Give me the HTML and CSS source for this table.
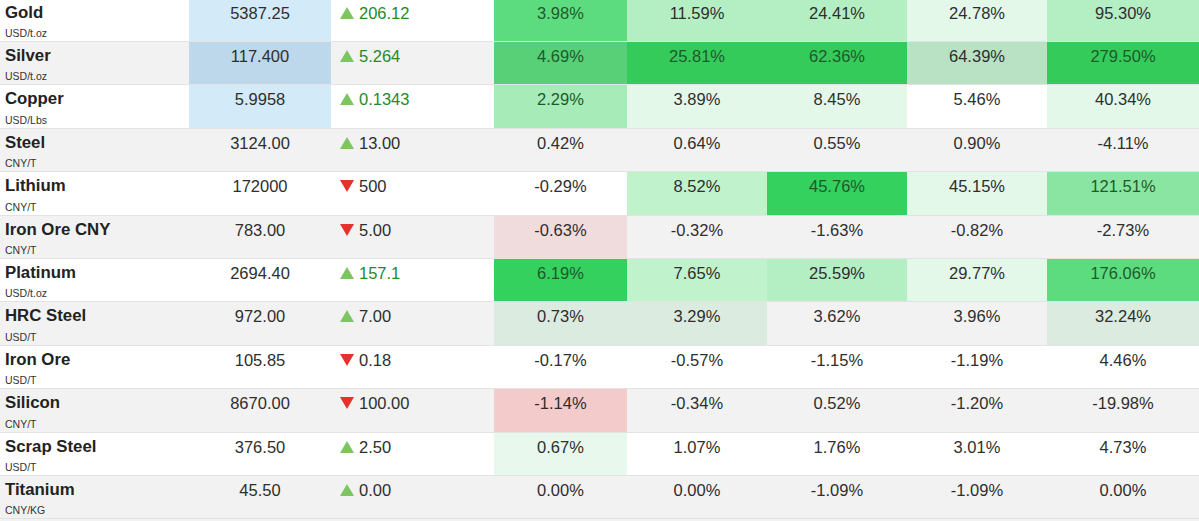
FILE: index.html
```html
<!DOCTYPE html>
<html>
<head>
<meta charset="utf-8">
<link rel="stylesheet" href="styles.css">
</head>
<body>
<div class="table">
  <div class="row">
    <div class="cell name"><div class="title">Gold</div><div class="unit">USD/t.oz</div></div>
    <div class="cell price blue">5387.25</div>
    <div class="cell chg up"><span class="tri-up"></span><span class="num green">206.12</span></div>
    <div class="cell pct g4 dk">3.98%</div>
    <div class="cell pct g2">11.59%</div>
    <div class="cell pct g2">24.41%</div>
    <div class="cell pct g1">24.78%</div>
    <div class="cell pct g2">95.30%</div>
  </div>
  <div class="row alt">
    <div class="cell name"><div class="title">Silver</div><div class="unit">USD/t.oz</div></div>
    <div class="cell price blue2">117.400</div>
    <div class="cell chg up"><span class="tri-up"></span><span class="num green">5.264</span></div>
    <div class="cell pct g4s dk">4.69%</div>
    <div class="cell pct g5 dk">25.81%</div>
    <div class="cell pct g5 dk">62.36%</div>
    <div class="cell pct g2s">64.39%</div>
    <div class="cell pct g5 dk">279.50%</div>
  </div>
  <div class="row">
    <div class="cell name"><div class="title">Copper</div><div class="unit">USD/Lbs</div></div>
    <div class="cell price blue">5.9958</div>
    <div class="cell chg up"><span class="tri-up"></span><span class="num green">0.1343</span></div>
    <div class="cell pct g3b dk">2.29%</div>
    <div class="cell pct g1">3.89%</div>
    <div class="cell pct g1">8.45%</div>
    <div class="cell pct">5.46%</div>
    <div class="cell pct g1">40.34%</div>
  </div>
  <div class="row alt">
    <div class="cell name"><div class="title">Steel</div><div class="unit">CNY/T</div></div>
    <div class="cell price">3124.00</div>
    <div class="cell chg up"><span class="tri-up"></span><span class="num">13.00</span></div>
    <div class="cell pct">0.42%</div>
    <div class="cell pct">0.64%</div>
    <div class="cell pct">0.55%</div>
    <div class="cell pct">0.90%</div>
    <div class="cell pct">-4.11%</div>
  </div>
  <div class="row">
    <div class="cell name"><div class="title">Lithium</div><div class="unit">CNY/T</div></div>
    <div class="cell price">172000</div>
    <div class="cell chg down"><span class="tri-down"></span><span class="num">500</span></div>
    <div class="cell pct">-0.29%</div>
    <div class="cell pct g2b">8.52%</div>
    <div class="cell pct g5b dk">45.76%</div>
    <div class="cell pct g1">45.15%</div>
    <div class="cell pct g3 dk">121.51%</div>
  </div>
  <div class="row alt">
    <div class="cell name"><div class="title">Iron Ore CNY</div><div class="unit">CNY/T</div></div>
    <div class="cell price">783.00</div>
    <div class="cell chg down"><span class="tri-down"></span><span class="num">5.00</span></div>
    <div class="cell pct r1">-0.63%</div>
    <div class="cell pct">-0.32%</div>
    <div class="cell pct">-1.63%</div>
    <div class="cell pct">-0.82%</div>
    <div class="cell pct">-2.73%</div>
  </div>
  <div class="row">
    <div class="cell name"><div class="title">Platinum</div><div class="unit">USD/t.oz</div></div>
    <div class="cell price">2694.40</div>
    <div class="cell chg up"><span class="tri-up"></span><span class="num green">157.1</span></div>
    <div class="cell pct g5b dk">6.19%</div>
    <div class="cell pct g2b">7.65%</div>
    <div class="cell pct g2">25.59%</div>
    <div class="cell pct g1">29.77%</div>
    <div class="cell pct g4 dk">176.06%</div>
  </div>
  <div class="row alt">
    <div class="cell name"><div class="title">HRC Steel</div><div class="unit">USD/T</div></div>
    <div class="cell price">972.00</div>
    <div class="cell chg up"><span class="tri-up"></span><span class="num">7.00</span></div>
    <div class="cell pct gh">0.73%</div>
    <div class="cell pct gh">3.29%</div>
    <div class="cell pct">3.62%</div>
    <div class="cell pct">3.96%</div>
    <div class="cell pct gh">32.24%</div>
  </div>
  <div class="row">
    <div class="cell name"><div class="title">Iron Ore</div><div class="unit">USD/T</div></div>
    <div class="cell price">105.85</div>
    <div class="cell chg down"><span class="tri-down"></span><span class="num">0.18</span></div>
    <div class="cell pct">-0.17%</div>
    <div class="cell pct">-0.57%</div>
    <div class="cell pct">-1.15%</div>
    <div class="cell pct">-1.19%</div>
    <div class="cell pct">4.46%</div>
  </div>
  <div class="row alt">
    <div class="cell name"><div class="title">Silicon</div><div class="unit">CNY/T</div></div>
    <div class="cell price">8670.00</div>
    <div class="cell chg down"><span class="tri-down"></span><span class="num">100.00</span></div>
    <div class="cell pct r2">-1.14%</div>
    <div class="cell pct">-0.34%</div>
    <div class="cell pct">0.52%</div>
    <div class="cell pct">-1.20%</div>
    <div class="cell pct">-19.98%</div>
  </div>
  <div class="row">
    <div class="cell name"><div class="title">Scrap Steel</div><div class="unit">USD/T</div></div>
    <div class="cell price">376.50</div>
    <div class="cell chg up"><span class="tri-up"></span><span class="num">2.50</span></div>
    <div class="cell pct g0">0.67%</div>
    <div class="cell pct">1.07%</div>
    <div class="cell pct">1.76%</div>
    <div class="cell pct">3.01%</div>
    <div class="cell pct">4.73%</div>
  </div>
  <div class="row alt">
    <div class="cell name"><div class="title">Titanium</div><div class="unit">CNY/KG</div></div>
    <div class="cell price">45.50</div>
    <div class="cell chg up"><span class="tri-up"></span><span class="num">0.00</span></div>
    <div class="cell pct">0.00%</div>
    <div class="cell pct">0.00%</div>
    <div class="cell pct">-1.09%</div>
    <div class="cell pct">-1.09%</div>
    <div class="cell pct">0.00%</div>
  </div>
</div>
</body>
</html>
```
FILE: styles.css
```css
html, body {
  margin: 0;
  padding: 0;
  background: #f2f2f2;
}
body {
  font-family: "Liberation Sans", Arial, Helvetica, sans-serif;
  color: #2e2e2e;
  overflow: hidden;
}
.table {
  margin-top: -1.5px;
  width: 1199px;
}
.row {
  display: grid;
  grid-template-columns: 189px 142px 163px 133px 140px 140px 140px 152px;
  height: 42.42px;
  border-bottom: 1px solid #e3e3e3;
  background: #ffffff;
}
.row.alt {
  background: #f2f2f2;
}
.cell {
  padding-top: 4px;
  font-size: 16.5px;
  line-height: 20px;
  box-sizing: border-box;
}
.name {
  padding-left: 5px;
}
.title {
  font-weight: bold;
  font-size: 16.8px;
  color: #222;
}
.unit {
  font-size: 10.5px;
  line-height: 12px;
  margin-top: 4.5px;
  color: #333;
}
.price {
  text-align: center;
}
.blue { background: #d3eaf8; }
.blue2 { background: #bcd8ea; }
.chg {
  display: flex;
  align-items: center;
  height: 24px;
  padding-left: 9px;
  gap: 5px;
}
.tri-up {
  width: 0;
  height: 0;
  border-left: 7px solid transparent;
  border-right: 7px solid transparent;
  border-bottom: 12px solid #7cc561;
}
.tri-down {
  width: 0;
  height: 0;
  border-left: 7px solid transparent;
  border-right: 7px solid transparent;
  border-top: 12px solid #e5322c;
}
.num { color: #2e2e2e; }
.num.green { color: #248a2a; }
.pct {
  text-align: center;
}
.dk { color: #1d5a2b; }
.g5 { background: #35cb5b; }
.g5b { background: #34d15e; }
.g4 { background: #5ddc7f; }
.g4s { background: #57d078; }
.g3 { background: #8ae5a2; }
.g3b { background: #a7ebb8; }
.g2 { background: #b4eec3; }
.g2b { background: #c0f2cc; }
.g2s { background: #b8e2c3; }
.g1 { background: #e3f8e9; }
.g0 { background: #e8f8ec; }
.gh { background: #dcebe0; }
.r1 { background: #f0dcdc; }
.r2 { background: #f3cbcb; }
```
